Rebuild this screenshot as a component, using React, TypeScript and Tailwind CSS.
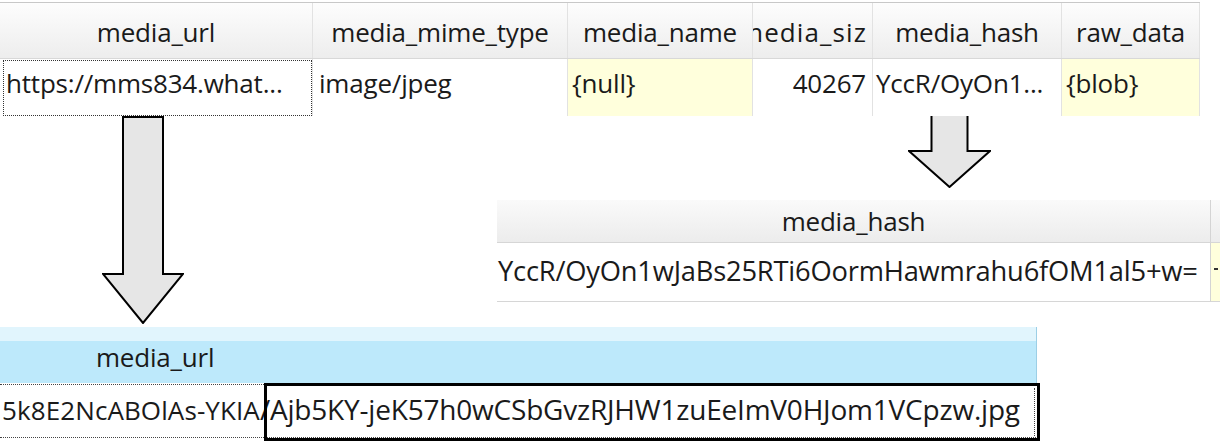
import React from 'react';

const font = { fontFamily: '"Open Sans", "Noto Sans", sans-serif' };

const cols = [
  { name: 'media_url', w: 'w-[313px]', value: 'https://mms834.what...', cell: 'pl-[6px]', yellow: false, focus: true },
  { name: 'media_mime_type', w: 'w-[255px]', value: 'image/jpeg', cell: 'pl-[6px]', yellow: false, focus: false },
  { name: 'media_name', w: 'w-[185px]', value: '{null}', cell: 'pl-[4px]', yellow: true, focus: false },
  { name: 'media_size', w: 'w-[120px]', value: '40267', cell: 'justify-end pr-[6px]', yellow: false, focus: false },
  { name: 'media_hash', w: 'w-[189px]', value: 'YccR/OyOn1...', cell: 'pl-[3px]', yellow: false, focus: false },
  { name: 'raw_data', w: 'w-[138px]', value: '{blob}', cell: 'pl-[4px]', yellow: true, focus: false },
];

function Arrow({ w, h, shaft, headStart }: { w: number; h: number; shaft: number; headStart: number }) {
  const l = (w - shaft) / 2;
  const r = l + shaft;
  const pts = `${l},1 ${r},1 ${r},${headStart} ${w - 1},${headStart} ${w / 2},${h - 1} 1,${headStart} ${l},${headStart}`;
  return (
    <svg width={w} height={h} viewBox={`0 0 ${w} ${h}`} className="block">
      <polygon points={pts} fill="#e6e6e6" stroke="#000" strokeWidth="2" strokeLinejoin="miter" />
    </svg>
  );
}

export default function App() {
  return (
    <div className="w-[1220px] h-[442px] bg-white overflow-hidden text-[#1a1a1a] text-[26px] tracking-[-0.2px]" style={font}>
      {/* top grid */}
      <div className="w-[1200px] mt-[2px] border-t border-[#c8c8c8]">
        <div className="flex h-[56px] bg-gradient-to-b from-[#fdfdfd] to-[#ededed] border-b border-[#d8d8d8]">
          {cols.map((c) => (
            <div
              key={c.name}
              className={`${c.w} shrink-0 flex items-center pt-[4px] overflow-hidden whitespace-nowrap border-r border-[#e2e2e2] ${
                c.name === 'media_size' ? 'justify-end pr-[5px] tracking-[1.1px]' : 'justify-center'
              }`}
            >
              {c.name === 'media_size' ? 'media_siz' : c.name}
            </div>
          ))}
        </div>
        <div className="flex h-[57px]">
          {cols.map((c) => (
            <div
              key={c.name}
              className={`${c.w} shrink-0 relative flex items-start pt-[5px] overflow-hidden whitespace-nowrap border-r border-[#e2e2e2] ${c.cell} ${
                c.yellow ? 'bg-[#ffffdc]' : 'bg-white'
              }`}
            >
              {c.focus && <div className="absolute left-[3px] top-[1px] right-0 bottom-0 border border-dotted border-[#333]" />}
              {c.value}
            </div>
          ))}
        </div>
      </div>

      {/* arrows + hash zoom */}
      <div className="flex h-[211px]">
        <div className="pl-[102px]">
          <Arrow w={82} h={208} shaft={40} headStart={158} />
        </div>
        <div className="ml-auto w-[723px] flex flex-col">
          <div className="pl-[411px] -mt-[2px]">
            <Arrow w={83} h={74} shaft={36} headStart={37} />
          </div>
          <div className="mt-[12px] flex">
            <div className="w-[714px] shrink-0 border-r border-[#d4d4d4]">
              <div className="h-[43px] flex items-center justify-center bg-gradient-to-b from-[#fafafa] to-[#ececec] border-b border-[#d6d6d6]">
                media_hash
              </div>
              <div className="h-[59px] flex items-start pt-[8px] pl-[1px] whitespace-nowrap text-[27.3px] border-b border-[#d6d6d6]">
                YccR/OyOn1wJaBs25RTi6OormHawmrahu6fOM1al5+w=
              </div>
            </div>
            <div className="flex-1 flex flex-col">
              <div className="h-[43px] bg-gradient-to-b from-[#fafafa] to-[#ececec] border-b border-[#d6d6d6]" />
              <div className="h-[59px] bg-[#ffffdc] border-b border-[#d6d6d6] pl-[3px] pt-[25px]">
                <div className="w-[4px] h-[2px] bg-[#333]" />
              </div>
            </div>
          </div>
        </div>
      </div>

      {/* url zoom */}
      <div className="w-[1037px] border-r border-[#9ccfe6]">
        <div className="h-[14px] bg-[#e1f5fd]" />
        <div className="h-[42px] bg-[#bde9fb] flex items-center pl-[96px] pb-[10px]">media_url</div>
      </div>
      <div className="relative w-[1040px] h-[58px]">
        <div className="absolute inset-x-0 top-[1px] bottom-[3px] border-y border-dotted border-[#444]" />
        <div className="pl-[2px] pt-[5px] whitespace-nowrap">
          <span className="tracking-[0.1px]">5k8E2NcABOlAs-YKIA</span>
          <span className="text-[28px]">/Ajb5KY-jeK57h0wCSbGvzRJHW1zuEeImV0HJom1VCpzw.jpg</span>
        </div>
        <div className="absolute left-[264px] top-0 right-0 bottom-0 border-[3px] border-black">
          <div className="absolute right-[2px] top-[2px] bottom-[2px] border-r border-dotted border-[#444]" />
        </div>
      </div>
    </div>
  );
}
